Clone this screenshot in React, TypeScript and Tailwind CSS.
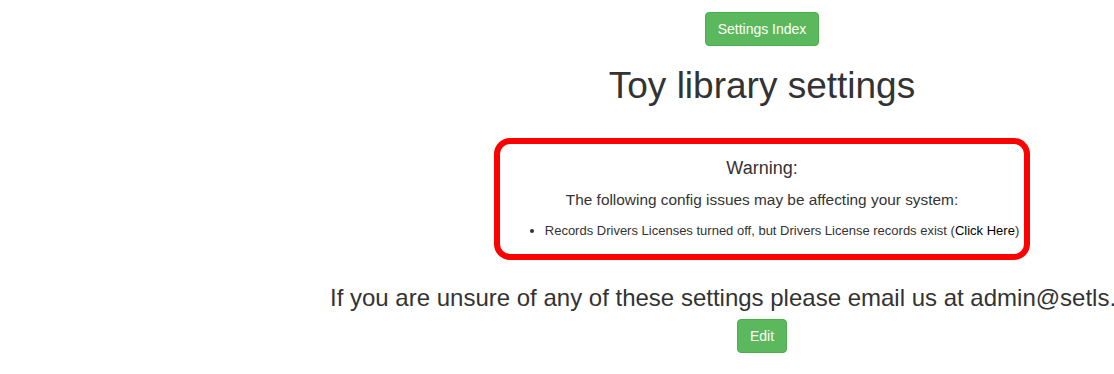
export default function App() {
  return (
    <div className="h-[374px] w-full overflow-hidden bg-white text-[#333] font-['Liberation_Sans',Arial,sans-serif]">
      <div className="ml-[330px] w-[864px] pt-[12px] text-center">
        {/* Index button */}
        <div>
          <button className="inline-block h-[34px] rounded-[4px] border border-[#4cae4c] bg-[#5cb85c] px-[12px] text-[14px] leading-[20px] text-white">
            Settings Index
          </button>
        </div>

        <h1 className="mt-[20px] text-[37px] leading-[40px] text-[#333]">Toy library settings</h1>

        {/* Config warning */}
        <div className="mt-[32px]">
          <div className="inline-block rounded-[16px] border-[6px] border-[#ff0000] px-[5px] pt-[14px] pb-[14px]">
            <div className="text-[18px] leading-[20px]">Warning:</div>
            <p className="mt-[12px] text-[15.4px] leading-[20px]">
              The following config issues may be affecting your system:
            </p>
            <ul className="mt-[12px] list-disc pl-[40px] text-left text-[13px] leading-[18px]">
              <li>
                Records Drivers Licenses turned off, but Drivers License records exist (
                <a href="#" className="text-black">Click Here</a>)
              </li>
            </ul>
          </div>
        </div>

        <h3 className="mt-[25px] whitespace-nowrap text-left text-[24px] leading-[26px]">
          If you are unsure of any of these settings please email us at admin@setls.com.au
        </h3>
        <div className="mt-[8px]">
          <button className="inline-block h-[34px] rounded-[4px] border border-[#4cae4c] bg-[#5cb85c] px-[12px] text-[14px] leading-[20px] text-white">
            Edit
          </button>
        </div>
      </div>
    </div>
  );
}
